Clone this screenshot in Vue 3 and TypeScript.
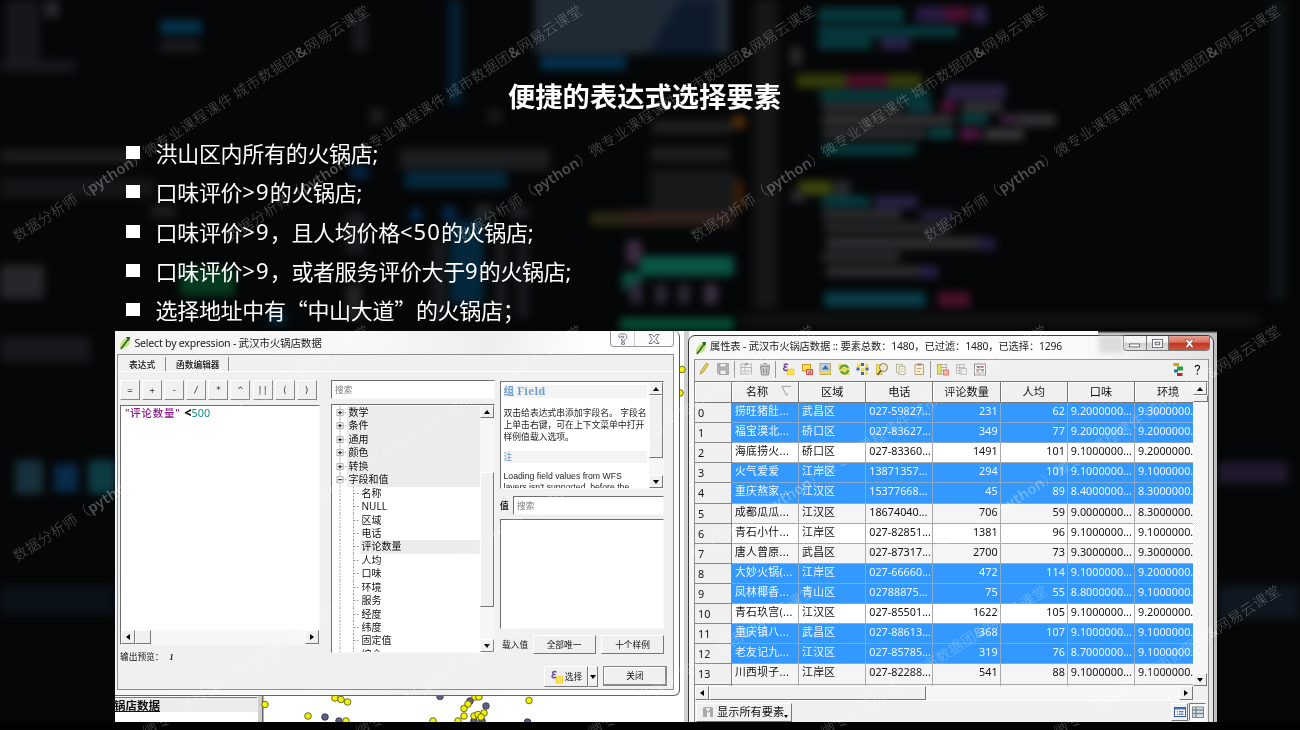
<script setup lang="ts">
interface Row { name: string; area: string; tel: string; n: number; avg: number; taste: string; env: string; on: boolean }

const bullets: string[][] = [
  '洪山区内所有的火锅店;',
  '口味评价>9的火锅店;',
  '口味评价>9，且人均价格<50的火锅店;',
  '口味评价>9，或者服务评价大于9的火锅店;',
  '选择地址中有“中山大道”的火锅店；',
].map(s => s.split(/([<>0-9]+|[“”])/).filter(Boolean))
const kind = (s: string): string => (/^[<>0-9]/.test(s) ? 'lat' : /^[“”]/.test(s) ? 'quo' : '')
const ops: string[] = ['=', '+', '-', '/', '*', '^', '||', '(', ')']
const groups: string[] = ['数学', '条件', '通用', '颜色', '转换', '字段和值']
const fields: string[] = ['名称', 'NULL', '区域', '电话', '评论数量', '人均', '口味', '环境', '服务', '经度', '纬度', '固定值', '综合']
const heads: string[] = ['名称', '区域', '电话', '评论数量', '人均', '口味', '环境']

const r = (name: string, area: string, tel: string, n: number, avg: number, taste: string, env: string, on: boolean): Row =>
  ({ name, area, tel, n, avg, taste: taste + '000000...', env: env + '000000.', on })
const rows: Row[] = [
  r('捞旺猪肚...', '武昌区', '027-59827...', 231, 62, '9.2', '9.3', true),
  r('福宝漠北...', '硚口区', '027-83627...', 349, 77, '9.2', '9.2', true),
  r('海底捞火...', '硚口区', '027-83360...', 1491, 101, '9.1', '9.2', false),
  r('火气爱爱', '江岸区', '13871357...', 294, 101, '9.1', '9.1', true),
  r('重庆熬家...', '江汉区', '15377668...', 45, 89, '8.4', '8.3', true),
  r('成都瓜瓜...', '江汉区', '18674040...', 706, 59, '9.0', '8.3', false),
  r('青石小什...', '江岸区', '027-82851...', 1381, 96, '9.1', '9.1', false),
  r('唐人曾原...', '武昌区', '027-87317...', 2700, 73, '9.3', '9.3', false),
  r('大妙火锅(...', '江岸区', '027-66660...', 472, 114, '9.1', '9.2', true),
  r('凤林椰香...', '青山区', '02788875...', 75, 55, '8.8', '9.1', true),
  r('青石玖宫(...', '江汉区', '027-85501...', 1622, 105, '9.1', '9.2', false),
  r('重庆镇八...', '武昌区', '027-88613...', 368, 107, '9.1', '9.1', true),
  r('老友记九...', '江汉区', '027-85785...', 319, 76, '8.7', '9.1', true),
  r('川西坝子...', '江岸区', '027-82288...', 541, 88, '9.1', '9.1', false),
]

const yellow: number[][] = [[335, 698], [341, 699.5], [347.5, 702], [346, 721], [433, 721], [458, 721], [464, 708.5], [464, 716], [468, 704], [475, 697], [479, 697], [474, 716], [478, 714.5], [484, 713], [481, 717], [308, 716], [265, 704.5], [529, 700.5], [682, 369.5], [680, 393]]
const violet: number[][] = [[440, 696.5], [470, 701], [486, 706], [474, 721], [482, 721], [339, 721], [325, 717], [527.5, 722]]

/* x, y, width, height, colour of the out-of-focus shapes behind the slide */
const blurs: [number, number, number, number, string][] = [
  [160, 20, 42, 14, '#05324a'], [160, 40, 40, 12, '#1b1b1e'], [5, 0, 35, 60, '#15171a'], [0, 60, 76, 12, '#17191d'],
  [45, 0, 14, 18, '#26282b'], [352, 15, 16, 36, '#17191c'], [448, 0, 14, 105, '#061f30'], [370, 108, 14, 16, '#1d1e20'],
  [488, 108, 14, 16, '#17181a'], [0, 150, 140, 13, '#1c1d1f'], [0, 178, 155, 20, '#141517'], [150, 204, 26, 14, '#1a1b1d'],
  [400, 148, 150, 22, '#1c1d1f'], [405, 172, 102, 16, '#042a3e'], [350, 165, 18, 14, '#062541'], [410, 208, 12, 14, '#062848'],
  [442, 206, 14, 14, '#062848'], [475, 205, 18, 14, '#242529'], [510, 206, 18, 12, '#202125'], [345, 212, 20, 42, '#1a1b1e'],
  [450, 220, 34, 84, '#04273c'], [432, 240, 14, 80, '#191a1e'], [495, 240, 12, 78, '#1a1b1e'], [517, 240, 12, 78, '#191a1e'],
  [346, 284, 16, 36, '#222326'], [180, 268, 55, 28, '#063a1e'], [0, 265, 44, 34, '#26272a'], [268, 312, 18, 12, '#06273f'],
  [534, -8, 196, 62, '#202a35'], [540, 56, 86, 14, '#04314c'], [590, 212, 80, 14, '#2a2812'], [624, 210, 110, 16, '#30201d'],
  [626, 240, 16, 24, '#3b2b42'], [622, 272, 20, 18, '#0b4f41'], [640, 256, 94, 20, '#0a5546'], [630, 282, 12, 22, '#30273a'],
  [655, 284, 12, 20, '#2c2735'], [678, 284, 12, 20, '#2c2735'], [704, 284, 14, 20, '#3a3044'], [620, 318, 114, 12, '#075037'],
  [652, 120, 80, 14, '#1d1e20'], [650, 146, 80, 16, '#1c1d1f'], [650, 170, 86, 42, '#17181a'], [734, 180, 10, 30, '#3a1d08'],
  [732, 115, 14, 14, '#4a2b0b'], [754, 0, 24, 308, '#161817'], [790, 46, 12, 20, '#27292a'],
  [818, 8, 86, 14, '#073b3f'], [818, 26, 140, 11, '#073b3f'], [818, 38, 54, 11, '#073b3f'], [916, 6, 38, 16, '#2a1b42'], [945, 6, 24, 16, '#4a1030'], [972, 6, 15, 18, '#2c2248'], [880, 38, 30, 12, '#2a2148'],
  [796, 74, 126, 14, '#343d0b'], [846, 74, 42, 14, '#4b1027'], [820, 90, 110, 11, '#073b3f'], [946, 84, 60, 16, '#2a2140'], [822, 103, 80, 8, '#323335'], [906, 103, 26, 8, '#0a494b'], [940, 101, 16, 10, '#511238'], [962, 102, 40, 10, '#353438'],
  [822, 115, 132, 10, '#333436'], [960, 114, 28, 10, '#0a3f41'], [1000, 114, 26, 10, '#39243e'], [1018, 114, 38, 12, '#323335'], [822, 129, 104, 9, '#2f3032'], [928, 129, 26, 9, '#0a494b'], [960, 128, 20, 12, '#501642'], [984, 129, 40, 11, '#39393b'],
  [822, 144, 94, 11, '#073b3f'], [798, 181, 34, 14, '#3e480c'], [834, 180, 16, 16, '#28292b'], [790, 190, 16, 12, '#27282a'],
  [822, 196, 48, 11, '#073b3f'], [874, 196, 44, 12, '#282346'], [822, 210, 80, 9, '#2f3032'], [920, 210, 34, 10, '#251e3b'], [824, 223, 126, 9, '#2b2c2e'], [826, 237, 156, 12, '#2e2f31'], [978, 238, 18, 12, '#261f42'], [822, 252, 78, 10, '#2a2b2d'], [826, 266, 106, 11, '#2c2d2f'], [920, 266, 18, 12, '#282048'],
  [824, 292, 102, 15, '#093e48'], [938, 292, 32, 15, '#4b112a'], [740, 314, 520, 12, '#111212'],
  [1270, 0, 16, 300, '#0e1415'], [0, 336, 90, 26, '#16181c'], [15, 460, 28, 34, '#18313c'], [54, 464, 24, 28, '#082c4b'], [88, 460, 28, 34, '#0d3b42'], [1218, 585, 82, 34, '#0f1720'], [1218, 462, 70, 22, '#201a2c'], [0, 585, 115, 30, '#0b1118'],
]
const marks: number[][] = [0, 320, 580].flatMap(dy => [15, 228, 460.5, 693, 926].map(x => [x + 2, 242 + dy]))
</script>

<template>
  <div class="slide">
    <svg class="backdrop" viewBox="0 0 1300 730" aria-hidden="true">
      <defs>
        <filter id="soft" x="-10%" y="-10%" width="120%" height="120%" color-interpolation-filters="sRGB"><feGaussianBlur stdDeviation="4.200" /></filter>
      </defs>
      <rect width="1300" height="730" fill="#050607" />
      <g filter="url(#soft)">
        <rect v-for="(b, i) in blurs" :key="i" :x="b[0]" :y="b[1]" :width="b[2]" :height="b[3]" :fill="b[4]" rx="3" />
        <path d="M650 50L680 0H716V54H650z" fill="#0c1a2b" />
      </g>
      <rect y="722" width="1300" height="8" fill="#020202" />
    </svg>

    <h1>便捷的表达式选择要素</h1>
    <ul class="bullets">
      <li v-for="(b, i) in bullets" :key="i"><i></i><span v-for="(s, k) in b" :key="k" :class="kind(s)">{{ s }}</span></li>
    </ul>

    <div class="desktop">
      <svg class="map" viewBox="115 331 1102 391" aria-hidden="true">
        <rect x="115" y="331" width="1102" height="391" fill="#fff" />
        <rect x="115" y="697" width="143" height="15" fill="#ececec" />
        <rect x="115" y="697" width="142" height="1" fill="#777" />
        <rect x="258" y="690" width="5" height="32" fill="#cfcfcf" />
        <rect x="262" y="690" width="1.5" height="32" fill="#666" />
        <rect x="684" y="331" width="5" height="391" fill="#d0d0d0" />
        <rect x="1098" y="331" width="119" height="391" fill="#bdbdbd" />
        <rect x="1098" y="331" width="119" height="1.5" fill="#333" />
        <g fill="#5f5f8c" stroke="#2b2b3c" stroke-width=".8">
          <circle v-for="(p, i) in violet" :key="i" :cx="p[0]" :cy="p[1]" r="3.3" />
        </g>
        <g fill="#f2f208" stroke="#4a4a10" stroke-width=".8">
          <circle v-for="(p, i) in yellow" :key="i" :cx="p[0]" :cy="p[1]" r="3.3" />
        </g>
      </svg>
      <div class="layer-name">锅店数据</div>

      <section class="win expr">
        <header>
          <svg class="logo" viewBox="0 0 12 14"><path d="M1 13C0 6 5 2 11 1C12 7 9 12 4 12z" fill="#c9e07a" /><path d="M2 13L10 2" stroke="#1f6b2c" stroke-width="1.6" /><path d="M7 1L11 1L10 5z" fill="#1d5a2b" /></svg>
          <span class="wt t1">Select by expression - 武汉市火锅店数据</span>
          <div class="ghost-btns">
            <span><svg viewBox="0 0 12 13"><path d="M1.500 4.500V2.500L3 1H8L10 2.700V5.500L7.500 7.500V8.500H4.500V6.500L7 4.500V3.500H4.300V4.500zM4.500 10H7.500V12.300H4.500z" fill="#fff" stroke="#667" stroke-width=".9" /></svg></span>
            <span><svg viewBox="0 0 12 12"><path d="M1 1.500H4L6 4L8 1.500H11L7.800 6L11 10.500H8L6 8L4 10.500H1L4.200 6z" fill="#fff" stroke="#667" stroke-width=".9" /></svg></span>
          </div>
        </header>
        <div class="client">
          <nav><b>表达式</b><b>函数编辑器</b></nav>
          <div class="cols">
            <div class="c1">
              <div class="ops"><button v-for="o in ops" :key="o">{{ o }}</button></div>
              <div class="editor sunken">
                <p><span class="str">"评论数量"</span> <b>&lt;</b><span class="num">500</span></p>
                <div class="hbar"><button class="l"></button><i></i><button class="r"></button></div>
              </div>
              <div class="preview">输出预览：<em>1</em></div>
            </div>
            <div class="c2">
              <div class="search sunken">搜索</div>
              <div class="tree sunken">
                <ul>
                  <li v-for="(g, i) in groups" :key="g" class="grp">
                    <svg viewBox="0 0 16 13"><path d="M8 0V3M8 10V13M11 6.500H15" stroke="#888" stroke-dasharray="1 1" fill="none" /><rect x="5" y="3.500" width="6" height="6" fill="#fff" stroke="#999" stroke-width=".8" /><path :d="i < 5 ? 'M6.200 6.500H9.800M8 4.700V8.300' : 'M6.200 6.500H9.800'" stroke="#000" /></svg><span>{{ g }}</span>
                  </li>
                  <li v-for="f in fields" :key="f" class="fld" :class="{ hot: f === '评论数量' }">
                    <svg viewBox="0 0 29 13.450"><path d="M8 0V13.450M21.500 0V13.450M22 6.500H27" stroke="#999" stroke-dasharray="1.500 1.500" fill="none" /></svg><span>{{ f }}</span>
                  </li>
                </ul>
                <div class="vbar"><button class="u"></button><i class="th-tree"></i><button class="d"></button></div>
              </div>
            </div>
            <div class="c3">
              <div class="help sunken">
                <div class="doc">
                  <h2>组 Field</h2>
                  <p>双击给表达式串添加字段名。 字段名<br>上单击右键，可在上下文菜单中打开<br>样例值载入选项。</p>
                  <h3>注</h3>
                  <p class="en"><span>Loading field values from WFS</span><br><span>layers isn't supported, before the</span></p>
                </div>
                <div class="vbar"><button class="u"></button><i class="th-help"></i><button class="d"></button></div>
              </div>
              <div class="valrow"><b>值</b><div class="search sunken">搜索</div></div>
              <div class="list sunken"></div>
              <div class="loadrow"><span>载入值</span><button>全部唯一</button><button>十个样例</button></div>
            </div>
          </div>
          <footer>
            <button class="sel"><svg viewBox="0 0 14 14"><rect x="6" y="6.500" width="7" height="6.500" fill="#fbe14a" stroke="#e0c030" stroke-width=".5" /><path d="M6.500 2.200C3.500 .4 1 2.800 4.300 4.500C.5 5.500 2 9 6 7.300" fill="none" stroke="#6b4a9c" stroke-width="1.500" /></svg>选择</button>
            <button class="drop"><i></i></button>
            <button class="close">关闭</button>
          </footer>
        </div>
      </section>

      <section class="win attr">
        <header>
          <svg class="logo" viewBox="0 0 12 14"><path d="M1 13C0 6 5 2 11 1C12 7 9 12 4 12z" fill="#c9e07a" /><path d="M2 13L10 2" stroke="#1f6b2c" stroke-width="1.6" /><path d="M7 1L11 1L10 5z" fill="#1d5a2b" /></svg>
          <span class="wt t2">属性表 - 武汉市火锅店数据 :: 要素总数：1480，已过滤：1480，已选择：1296</span>
          <div class="haze"></div>
          <div class="sysbtns">
            <span><svg viewBox="0 0 14 12"><rect x="1.500" y="6.500" width="11" height="3.200" fill="#fff" stroke="#556" stroke-width=".9" /></svg></span>
            <span><svg viewBox="0 0 14 12"><rect x="1.500" y="1.500" width="11" height="9" fill="#fff" stroke="#556" stroke-width=".9" /><rect x="4.500" y="4.500" width="5" height="3" fill="#ddd" stroke="#556" stroke-width=".9" /></svg></span>
            <span class="x"><svg viewBox="0 0 12 12"><path d="M1 1.500H4L6 4L8 1.500H11L7.800 6L11 10.500H8L6 8L4 10.500H1L4.200 6z" fill="#fff" stroke="#7a3a34" stroke-width=".7" /></svg></span>
          </div>
        </header>
        <div class="client">
          <svg class="tools" viewBox="695 359 513 22">
            <path d="M695 359.500H1208" stroke="#999" />
            <path d="M734.500 361V378M775.500 361V378M930.500 361V378" stroke="#999" />
            <path d="M700 374L701 371L706.500 363L708.500 364.500L703 372.500z" fill="#f3d24b" stroke="#9a7b2a" stroke-width=".7" />
            <g fill="#b4b4b4" stroke="#999" stroke-width=".7"><path d="M717.500 363.500H728.500V374.500H719L717.500 373z" /><path d="M720 363.500H726V367H720zM720 370H726V374.500H720z" fill="#f0f0f0" /></g>
            <g fill="#eee" stroke="#b4b4b4"><rect x="741" y="364" width="10.500" height="10" /><path d="M741 367.500H751.500M741 371H751.500M745 364V374" /><path d="M745 364h3" stroke="#777" /></g>
            <g fill="#c4c4c4" stroke="#909090"><path d="M760.500 366.500H769.500L768.500 375H761.500z" /><path d="M760 365H770M763.500 363.500H766.500M763.500 368.500V373M766.500 368.500V373" fill="none" /></g>
            <rect x="787" y="369" width="7" height="6" fill="#fbe14a" stroke="#e0c030" stroke-width=".5" /><path d="M788 364.800C785 363 782.500 365.500 785.800 367C782 368 783.500 371.500 787.500 370" fill="none" stroke="#6b4a9c" stroke-width="1.500" />
            <rect x="802.500" y="364.500" width="8" height="6.500" fill="#fbe14a" stroke="#c9952a" /><rect x="806.500" y="369.500" width="6" height="5" fill="#f7c3c3" stroke="#d9534f" /><path d="M808 370.500L811.500 374M811.500 370.500L808 374" stroke="#c33" />
            <rect x="820" y="363.500" width="10.500" height="11" fill="#b9d0e8" stroke="#b8a860" /><path d="M820 372.500H830.500" stroke="#f3d84a" stroke-width="2.500" /><path d="M822 369.500H829L825.500 365z" fill="#376a9e" />
            <path d="M838.500 364H846L849.500 368V375H843L838.500 370z" fill="#e6dc5c" /><path d="M840 369C842 364 847 365 848 368M848.500 370C847 375 842 374 841 371" fill="none" stroke="#5aa04c" stroke-width="2" />
            <g fill="#4a6698"><rect x="861" y="363" width="3" height="3" /><rect x="861" y="372" width="3" height="3" /><rect x="856.500" y="367.500" width="3" height="3" /><rect x="865.500" y="367.500" width="3" height="3" /></g><g fill="#f0dc3d"><rect x="857.500" y="364" width="3" height="3" /><rect x="865" y="364" width="3" height="3" /><rect x="861" y="368" width="3.500" height="3.500" /><rect x="865" y="372" width="3" height="3" /></g>
            <path d="M876.500 364.500H882V374.500H876.500z" fill="#f3df57" stroke="#c5ae3c" stroke-width=".7" /><circle cx="883.500" cy="367.500" r="4" fill="#ece9cf" stroke="#8a7a55" /><path d="M881 370.500L877.500 375" stroke="#6d5b3d" stroke-width="1.700" />
            <g fill="#f5f5ee" stroke="#a9a98c" stroke-width=".8"><rect x="896.500" y="364.500" width="6" height="8" /><rect x="899" y="366.500" width="6" height="8" /><path d="M900.500 369H903.500M900.500 371.500H903.500" stroke="#d0bd44" /></g>
            <g fill="#f8efd5" stroke="#b59a6a" stroke-width=".9"><rect x="915" y="364.500" width="8.500" height="10" /><path d="M917 364.500H921.500" stroke="#888" stroke-width="2" /><path d="M917 368.500H921.500M917 371.500H920" /></g>
            <g stroke-width=".8"><rect x="937.500" y="364.500" width="9" height="9.500" fill="#eee" stroke="#aaa" /><rect x="937.500" y="364.500" width="3.500" height="9.500" fill="#efe06a" stroke="#b4aa50" /><path d="M941 367.500H946.500M941 370.500H946.500" stroke="#8ab07c" /><rect x="943.500" y="370" width="5" height="5" fill="#f5b5b0" stroke="#d66" /></g>
            <g fill="#eee" stroke="#bbb" stroke-width=".9"><rect x="956.500" y="364.500" width="8" height="9" /><path d="M959.500 364.500V373.500M956.500 367.500H964.500M956.500 370.500H964.500" /><rect x="961" y="368.500" width="5.500" height="6" /></g>
            <g stroke-width=".9"><rect x="974.500" y="364" width="11" height="11" fill="#f4f4f4" stroke="#888" /><path d="M976 366.500H984M976 369.500H984M976 373H984" stroke="#999" /><path d="M977 367.500H980M981 370.500H984" stroke="#5b9c6a" stroke-width="1.500" /><path d="M981 367H983.500M976.500 371H979" stroke="#d55" stroke-width="1.500" /></g>
            <path d="M1173.500 364.500H1179" stroke="#c9a400" stroke-width="3" /><path d="M1177 368.500H1183" stroke="#2e9d49" stroke-width="4" /><path d="M1174 371H1178" stroke="#2b78a8" stroke-width="3" /><path d="M1177 374.500H1182.500" stroke="#c1272d" stroke-width="3" />
            <path d="M1195.200 367.300C1195.500 364.500 1200 365 1199.500 367.700C1199.200 369.500 1197.300 369.500 1197.300 371.500M1197.300 373V374.700" fill="none" stroke="#111" stroke-width="1.200" />
          </svg>
          <div class="gridwrap">
            <div class="grid">
              <div class="gr gh"><span></span><span v-for="(h, i) in heads" :key="h">{{ h }}<svg v-if="!i" viewBox="0 0 12 12"><path d="M11 1H1L6 11L7.500 8" fill="none" stroke="#999" /></svg></span></div>
              <div v-for="(w, i) in rows" :key="i" class="gr" :class="{ on: w.on, odd: i % 2 }">
                <span>{{ i }}</span><span class="zh">{{ w.name }}</span><span class="zh">{{ w.area }}</span><span>{{ w.tel }}</span><span class="n">{{ w.n }}</span><span class="n">{{ w.avg }}</span><span>{{ w.taste }}</span><span>{{ w.env }}</span>
              </div>
              <div class="gr tail"><span></span><span v-for="h in heads" :key="h"></span></div>
            </div>
            <div class="vbar gv"><button class="u"></button><i></i><button class="d"></button></div>
          </div>
          <div class="hbar gh2"><button class="l"></button><i></i><button class="r"></button></div>
          <div class="status">
            <button><svg viewBox="0 0 12 12"><path d="M1 1.500H11V11H8V6H5V11H1z" fill="#aaa" /><path d="M3 1.500H9L7 6H5z" fill="#eee" stroke="#888" stroke-width=".6" /></svg>显示所有要素<i></i></button>
            <div class="views">
              <span><svg viewBox="0 0 14 14"><rect x="1.500" y="2.500" width="11" height="9" fill="#fff" stroke="#3558a8" /><path d="M2 3.500H12" stroke="#3f73c9" stroke-width="2" /><path d="M4 6.800H5M6 6.800H10.500M4 9.200H5M6 9.200H10.500" stroke="#27427f" /></svg></span>
              <span class="dn"><svg viewBox="0 0 14 14"><rect x="1.500" y="2" width="11" height="10.500" fill="#dde4ea" stroke="#7b8790" /><path d="M1.500 5H12.500M1.500 8.500H12.500M5 2V12.500" stroke="#7b8790" stroke-width="1.400" /></svg></span>
            </div>
          </div>
        </div>
      </section>
    </div>

    <svg class="marks" viewBox="0 0 1300 730" aria-hidden="true">
      <g v-for="(m, i) in marks" :key="i" :transform="`translate(${m[0]} ${m[1]}) rotate(-32.900)`">
        <text textLength="421" lengthAdjust="spacing">数据分析师（<tspan class="py">python</tspan>）微专业课程课件 城市数据团<tspan class="py">&amp;</tspan>网易云课堂</text>
      </g>
    </svg>
  </div>
</template>

<style>
body { background: #000; overflow: hidden; }
</style>

<style scoped>
* { box-sizing: border-box; }
.slide { position: relative; width: 1300px; height: 730px; overflow: hidden; font-family: "Noto Sans", "Noto Sans CJK SC", sans-serif; color: #111; }
.backdrop, .marks { position: absolute; left: 0; top: 0; width: 1300px; height: 730px; pointer-events: none; }
.marks { mix-blend-mode: screen; }
.marks text { font: 300 14.500px "Noto Sans CJK SC", sans-serif; fill: #484b4b; }
.marks .py { font-family: "Noto Sans", sans-serif; font-weight: 600; }
h1, h2, h3, p, ul { margin: 0; padding: 0; }
h1 { position: relative; padding-top: 75.500px; height: 132.500px; width: 1289px; text-align: center; color: #fff; font: bold 27.300px/38px "Noto Sans CJK SC", sans-serif; }
.bullets { position: relative; list-style: none; padding-left: 126px; height: 198.500px; }
.bullets li { display: flex; align-items: center; height: 39.300px; color: #fff; font-size: 22px; letter-spacing: -.3px; white-space: nowrap; }
.bullets i { width: 14px; height: 13px; background: #fff; margin: 1px 15.500px 0 0; }
.bullets .lat { letter-spacing: 1.100px; }
.bullets .quo { font-family: "Noto Sans CJK SC", sans-serif; width: 21.700px; text-align: right; }
.bullets .quo ~ .quo { text-align: left; }
.desktop { position: relative; margin-left: 115px; width: 1102px; height: 391px; overflow: hidden; }
.map { position: absolute; left: 0; top: 0; width: 1102px; height: 391px; }
.layer-name { position: absolute; left: -1px; top: 366px; font: bold 11.500px/16px "Noto Sans CJK SC", sans-serif; text-decoration: underline; color: #111; }
.win { position: absolute; }
.win header { display: flex; align-items: center; white-space: nowrap; }
.logo { width: 12px; height: 14px; flex: none; }
button { font: inherit; color: inherit; padding: 0; margin: 0; background: #f0f0f0; border: 1px solid; border-color: #fff #777 #777 #fff; flex: none; }
.sunken { background: #fff; border: 1px solid; border-color: #6e6e6e #f8f8f8 #f8f8f8 #6e6e6e; }

.expr { left: 0; top: 0; width: 565px; height: 365px; background: linear-gradient(100deg, #f4f4f4 0, #f8f8f8 40%, #eee 60%, #fdfdfd 75%); border-right: 1px solid #555; border-bottom: 1px solid #666; border-radius: 0 6px 6px 0; }
.expr header { height: 23px; padding-left: 4px; }
.wt { color: #1a1a1a; line-height: 16px; }
.t1 { font-size: 10.600px; margin-left: 3.500px; letter-spacing: -.23px; }
.ghost-btns { display: flex; margin: 0 5px 0 auto; align-self: flex-start; height: 16px; border: 1px solid #999; border-top: 0; border-radius: 0 0 4px 4px; background: #fbfbfb; }
.ghost-btns span { width: 23px; display: flex; justify-content: center; align-items: center; }
.ghost-btns span + span { width: 39px; border-left: 1px solid #ccc; }
.ghost-btns svg { width: 12px; height: 12px; }
.client { background: #f0f0f0; }
.expr .client { margin: 0 5px 0 2px; height: 336px; border: 1px solid #8d8d8d; font-size: 8.700px; line-height: 12px; display: flex; flex-direction: column; }
nav { display: flex; height: 17px; padding-top: 2px; border-bottom: 1px solid #fff; }
nav b { font-weight: 500; line-height: 16px; padding: 0 10px 0 11px; border-right: 1px solid #888; height: 14px; white-space: nowrap; }
nav b + b { padding: 0 8px 0 10px; }
.cols { display: flex; padding: 8px 0 0 2px; height: 284px; }
.c1 { width: 200px; margin-right: 11px; }
.c2 { width: 164px; margin-right: 5px; }
.c3 { width: 164px; display: flex; flex-direction: column; }
.ops { display: flex; gap: 2.100px; height: 20px; margin-bottom: 5px; }
.ops button { width: 20px; height: 20px; font: 9px/16px "DejaVu Sans Mono", monospace; color: #333; border-color: #fff #888 #888 #fff; border-width: 1px 1.500px 1.500px 1px; }
.editor { height: 240px; display: flex; flex-direction: column; justify-content: space-between; font-size: 10.400px; }
.editor p { padding: 0 0 0 4px; line-height: 14px; white-space: pre; }
.editor p b { font-weight: 900; font-size: 12.500px; margin-left: 1px; }
.str { color: #8b1a8b; letter-spacing: .85px; font-weight: 500; }
.num { color: #17898b; font-size: 10.800px; }
.preview { margin-top: 6px; white-space: nowrap; }
.preview em { font: italic bold 8px "Liberation Serif", serif; margin-left: 6px; }
.hbar, .vbar { display: flex; background: repeating-conic-gradient(#fff 0 25%, #efefef 0 50%) 0 0 / 2px 2px; }
.vbar { flex-direction: column; width: 14px; flex: none; }
.hbar { height: 14px; }
.hbar button { width: 14px; height: 14px; }
.vbar button { width: 14px; height: 13px; }
.hbar i, .vbar i { background: #f0f0f0; border: 1px solid; border-color: #fff #777 #777 #fff; flex: none; }
.hbar i { width: 16px; }
.hbar .r { margin-left: auto; }
.vbar .d { margin-top: auto; }
.u, .d, .l, .r { display: grid; place-items: center; }
.u::before, .d::before, .l::before, .r::before, .drop i, .status button i { content: ""; border: 3.500px solid transparent; width: 0; height: 0; }
.u::before { border-bottom: 4px solid #000; border-top: 0; }
.d::before, .drop i { border-top: 4px solid #000; border-bottom: 0; }
.l::before { border-right: 4px solid #000; border-left: 0; }
.r::before { border-left: 4px solid #000; border-right: 0; }
.search { height: 19px; padding-left: 3px; color: #777; line-height: 18px; }
.tree { height: 249px; margin-top: 5px; display: flex; overflow: hidden; font-size: 10px; }
.tree ul { list-style: none; flex: 1; padding-top: 1px; height: 248px; overflow: hidden; }
.tree li { height: 13.450px; line-height: 13.450px; display: flex; white-space: nowrap; }
.tree li span { flex: 1; padding-left: 1.500px; margin-left: -1px; }
.grp svg { width: 16px; height: 13.450px; flex: none; }
.grp span, .hot span { background: #ececec; }
.fld svg { width: 29px; height: 13.450px; flex: none; }
.th-tree { height: 135px; margin-top: 54px; }
.help { margin-top: 1px; height: 108px; display: flex; overflow: hidden; }
.doc { flex: 1; padding: 3px 0 0 2.500px; overflow: hidden; white-space: nowrap; color: #222; }
.doc h2 { font: bold 10.600px/13px "Noto Serif", "DejaVu Serif", "Liberation Serif", "Noto Sans CJK SC", serif; color: #6f9fd0; background: #f4f4f4; margin-right: 2px; height: 13px; letter-spacing: .25px; }
.doc p { margin-top: 8.500px; font-size: 8.800px; line-height: 12px; }
.doc h3 { font: 500 8.700px/12px "Noto Sans CJK SC", sans-serif; color: #6f9fd0; background: #f4f4f4; margin: 8px 2px 0 0; }
.doc .en { font: 8.700px/11px "Liberation Sans", sans-serif; margin-top: 8px; }
.th-help { height: 63px; }
.valrow { display: flex; align-items: center; justify-content: space-between; margin-top: 7px; height: 19px; }
.valrow .search { width: 151px; }
.list { height: 110px; margin-top: 4px; }
.loadrow { display: flex; align-items: center; justify-content: space-between; height: 19px; margin-top: 6px; white-space: nowrap; padding-left: 2px; }
.loadrow button { width: 63px; height: 19px; line-height: 16px; }
.loadrow span { width: 26px; margin-right: -1px; }
.expr footer { display: flex; justify-content: flex-end; padding-right: 6px; margin-top: 10px; height: 21px; }
.sel { width: 44px; height: 21px; display: flex; align-items: center; justify-content: center; gap: 1px; white-space: nowrap; }
.sel svg { width: 14px; height: 14px; }
.drop { width: 10px; height: 21px; display: grid; place-items: center; margin-right: 5px; }
.expr .close { width: 64px; height: 20px; border: 1px solid #888; box-shadow: inset -1px -1px #888, inset 1px 1px #fff; line-height: 16px; }

.attr { left: 573px; top: 4px; width: 526px; height: 400px; border: 1.500px solid #3b3b3b; border-radius: 7px 7px 0 0; background: linear-gradient(90deg, #f6f6f6, #fff 40%, #fafafa 75%, #e2e2e2); }
.attr header { height: 23px; padding-left: 6px; }
.t2 { font-size: 10.300px; margin: -3px 0 0 3px; letter-spacing: -.13px; }
.haze { width: 24px; height: 17px; margin-left: auto; background: #dcdcdc; filter: blur(2px); align-self: flex-start; }
.sysbtns { display: flex; align-self: flex-start; height: 15px; margin-right: 3px; border: 1px solid #777; border-top: 0; border-radius: 0 0 4px 4px; overflow: hidden; background: linear-gradient(#f5f5f5 45%, #cfcfcf 50%, #e2e2e2); }
.sysbtns span { width: 22.500px; display: grid; place-items: center; border-right: 1px solid #777; }
.sysbtns svg { width: 13px; height: 11px; }
.sysbtns .x { width: 40px; border: 0; background: linear-gradient(#e8a091 0, #d9705c 45%, #bf3520 50%, #d5553c); }
.attr .client { margin: 0 3px 0 5px; width: 515px; border: 1px solid #8d8d8d; border-width: 0 1px 0 1px; height: 372px; }
.tools { display: block; width: 513px; height: 22px; }
.gridwrap { display: flex; height: 305px; }
.grid { width: 498px; height: 305px; overflow: hidden; border-top: 1px solid #777; }
.gr { display: flex; width: 520px; height: 20.120px; background: #fff; font-size: 10.800px; }
.gr span { width: 67.200px; height: 100%; flex: none; border-right: 1px solid #a9a9a9; border-bottom: 1px solid #a9a9a9; padding-left: 3px; line-height: 15.500px; white-space: nowrap; overflow: hidden; }
.gr .zh { letter-spacing: .35px; }
.gr span:first-child { width: 36.900px; background: #f0f0f0; line-height: 20px; padding-left: 3px; border-color: #888; }
.gr .n { text-align: right; padding-right: 2px; }
.gr.odd { background: #f5f5f5; }
.gr.on { background: #39f; }
.gr.on span:not(:first-child) { color: #f2f8ff; border-color: #87a9cb; }
.gr.gh { height: 21px; background: #f0f0f0; font-size: 11.200px; }
.gr.gh span { text-align: center; line-height: 20px; border-color: #777; padding: 0; box-shadow: inset 1px 1px #fff; }
.gr.gh span:nth-child(2) { padding-left: 8px; }
.gr.gh svg { width: 11px; height: 12px; margin-left: 13px; vertical-align: -1px; }
.gr.tail { height: 6px; background: #f5f5f5; }
.gv { width: 15px; border-top: 1px solid #777; }
.gv i { height: 7px; }
.gh2 i { width: 217px; }
.gh2 { padding-right: 15px; background-clip: content-box; }
.status { display: flex; justify-content: space-between; border-top: 1px solid #fff; padding: 2px 2px 0 1px; height: 24px; }
.status button { width: 96px; height: 19px; display: flex; align-items: center; font-size: 11.200px; line-height: 15px; padding: 0 0 2px 5px; white-space: nowrap; }
.status button svg { width: 12px; height: 12px; margin-right: 3px; }
.status button i { border-width: 2.500px; border-top: 3px solid #000; border-bottom: 0; align-self: flex-end; margin-bottom: 1px; }
.views { display: flex; gap: 1px; }
.views span { width: 17px; height: 18px; border: 1px solid; border-color: #fff #777 #777 #fff; display: grid; place-items: center; }
.views .dn { border-color: #777 #fff #fff #777; background: #f8f8f8; }
.views svg { width: 14px; height: 14px; }
</style>
